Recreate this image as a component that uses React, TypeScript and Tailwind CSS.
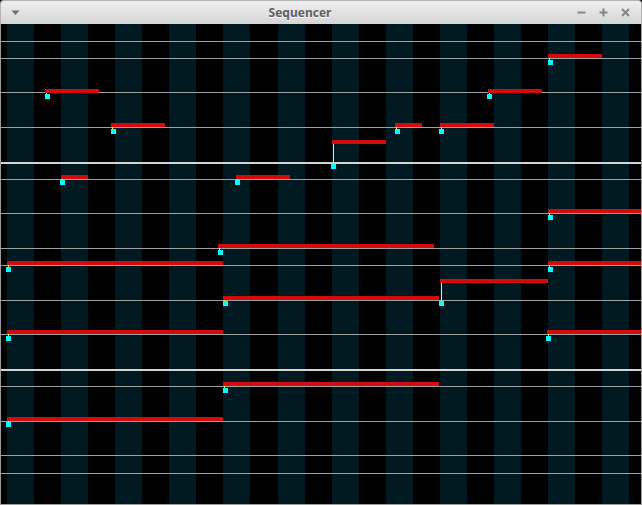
import React from "react";

type Note = { x: number; w: number; y: number; cx: number; cy: number };

// window coordinates: bar left/width/top, marker left/top
const notes: Note[] = [
    { x: 548, w: 54, y: 54, cx: 548, cy: 60 },
    { x: 45, w: 54, y: 89, cx: 45, cy: 94 },
    { x: 488, w: 54, y: 89, cx: 487, cy: 94 },
    { x: 111, w: 54, y: 123, cx: 111, cy: 129 },
    { x: 395, w: 27, y: 123, cx: 395, cy: 129 },
    { x: 440, w: 54, y: 123, cx: 439, cy: 129 },
    { x: 332, w: 54, y: 140, cx: 331, cy: 164 },
    { x: 61, w: 27, y: 175, cx: 60, cy: 180 },
    { x: 236, w: 54, y: 175, cx: 235, cy: 180 },
    { x: 548, w: 93, y: 209, cx: 548, cy: 215 },
    { x: 218, w: 216, y: 244, cx: 218, cy: 250 },
    { x: 7, w: 216, y: 261, cx: 6, cy: 267 },
    { x: 548, w: 93, y: 261, cx: 548, cy: 267 },
    { x: 440, w: 108, y: 279, cx: 439, cy: 301 },
    { x: 223, w: 216, y: 296, cx: 223, cy: 301 },
    { x: 7, w: 216, y: 330, cx: 6, cy: 336 },
    { x: 547, w: 94, y: 330, cx: 546, cy: 336 },
    { x: 223, w: 216, y: 382, cx: 223, cy: 388 },
    { x: 7, w: 216, y: 417, cx: 6, cy: 422 },
];

// rows between the key lines, each ends with its line
const rows = [
    "h-[18px] border-b border-[#a0a0a0]",
    "h-[17px] border-b border-[#a0a0a0]",
    "h-[34px] border-b border-[#a0a0a0]",
    "h-[35px] border-b border-[#a0a0a0]",
    "h-[36px] border-b-2 border-[#d4d4d4]",
    "h-[16px] border-b border-[#a0a0a0]",
    "h-[34px] border-b border-[#a0a0a0]",
    "h-[35px] border-b border-[#a0a0a0]",
    "h-[17px] border-b border-[#a0a0a0]",
    "h-[35px] border-b border-[#a0a0a0]",
    "h-[34px] border-b border-[#a0a0a0]",
    "h-[36px] border-b-2 border-[#d4d4d4]",
    "h-[16px] border-b border-[#a0a0a0]",
    "h-[35px] border-b border-[#a0a0a0]",
    "h-[34px] border-b border-[#a0a0a0]",
    "h-[18px] border-b border-[#a0a0a0]",
];

function TitleBar() {
    return (
        <div className="h-[24px] shrink-0 flex items-center rounded-t-[4px] border border-b-0 border-[#b4b4b4] bg-linear-to-b from-[#efefef] to-[#d5d5d5]">
            <div className="w-[40px] pl-[10px] flex items-center">
                <svg width="9" height="6" viewBox="0 0 9 6">
                    <polygon points="0.5,0.5 8.5,0.5 4.5,5" fill="#6e6e6e" />
                </svg>
            </div>
            <div
                className="flex-1 text-center text-[12px] font-bold text-[#5e5e5e] [text-shadow:0_1px_0_#ffffff] leading-none"
                style={{ fontFamily: "'Noto Sans', 'Open Sans', sans-serif" }}
            >
                Sequencer
            </div>
            <div className="w-[82px] flex items-center gap-[13px] pl-[18px]">
                <svg width="9" height="9" viewBox="0 0 9 9">
                    <path d="M0.5 4.5H8.5" stroke="#858585" strokeWidth="2" />
                </svg>
                <svg width="9" height="9" viewBox="0 0 9 9">
                    <path d="M0.5 4.5H8.5M4.5 0.5V8.5" stroke="#858585" strokeWidth="2" />
                </svg>
                <svg width="9" height="9" viewBox="0 0 9 9">
                    <path d="M1 1L8 8M8 1L1 8" stroke="#858585" strokeWidth="2" />
                </svg>
            </div>
        </div>
    );
}

function Stripes() {
    const cols = [];
    for (let i = 0; i < 23; i++) {
        const teal = i % 2 === 0;
        const wide = i === 9;
        cols.push(
            <div
                key={i}
                className={`${wide ? "w-[28px]" : "w-[27px]"} shrink-0 ${teal ? "bg-[#011920]" : "bg-black"}`}
            />
        );
    }
    return (
        <div className="absolute inset-0 flex bg-black">
            <div className="w-[6px] shrink-0" />
            {cols}
            <div className="flex-1" />
        </div>
    );
}

export default function App() {
    return (
        <div className="w-[642px] h-[505px] flex flex-col bg-black">
            <TitleBar />
            <div className="relative flex-1 border-x border-b border-[#9c9c9c]">
                <Stripes />
                <div className="absolute inset-0 flex flex-col">
                    {rows.map((r, i) => (
                        <div key={i} className={`${r} shrink-0`} />
                    ))}
                </div>
                <div className="absolute inset-0">
                    {notes.map((n, i) => (
                        <React.Fragment key={i}>
                            <div
                                className="absolute w-px bg-[#ffff00]"
                                style={{ left: n.x, top: n.y + 4 - 24, height: n.cy - n.y - 4 }}
                            />
                            <div
                                className="absolute h-[4px] bg-[#d20c0c]"
                                style={{ left: n.x - 1, top: n.y - 24, width: n.w }}
                            />
                            <div
                                className="absolute w-[5px] h-[5px] bg-[#00ffff]"
                                style={{ left: n.cx - 1, top: n.cy - 24 }}
                            />
                        </React.Fragment>
                    ))}
                </div>
            </div>
        </div>
    );
}
